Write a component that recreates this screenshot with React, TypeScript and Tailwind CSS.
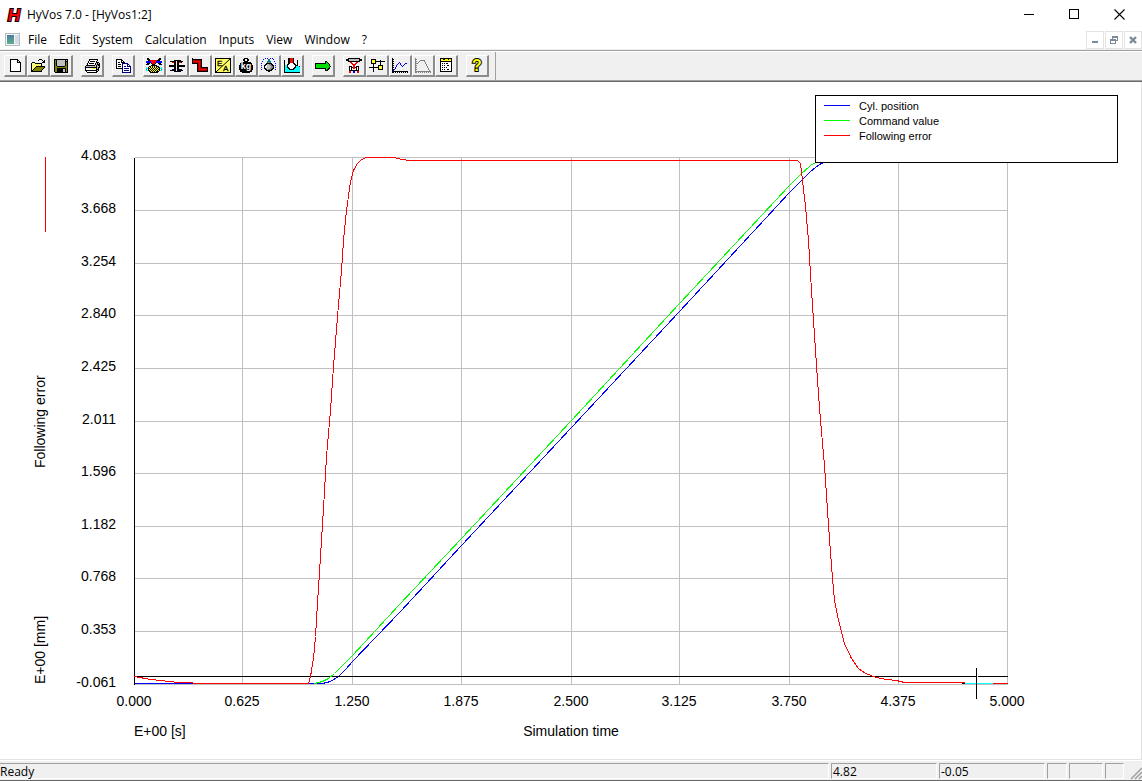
import React from "react";

const COLORS: Record<string, string> = {
  k: "#000000",
  w: "#ffffff",
  y: "#ffff00",
  p: "#ffffa0",
  o: "#808000",
  g: "#c0c0c0",
  d: "#808080",
  n: "#000080",
  b: "#0000ff",
  r: "#ff0000",
  m: "#a00000",
  c: "#00ffff",
  t: "#008080",
  l: "#00e000",
};

// 16x15 bitmaps, one character per pixel
const BITMAPS: Record<string, string[]> = {
  new: [
    "",
    "...kkkkkkkk",
    "...kwwwwwwkk",
    "...kwwwwwwkwk",
    "...kwwwwwwkkkk",
    "...kwwwwwwwwwk",
    "...kwwwwwwwwwk",
    "...kwwwwwwwwwk",
    "...kwwwwwwwwwk",
    "...kwwwwwwwwwk",
    "...kwwwwwwwwwk",
    "...kwwwwwwwwwk",
    "...kwwwwwwwwwk",
    "...kkkkkkkkkkk",
  ],
  open: [
    "",
    ".........kkk",
    "........k...k.k",
    ".............kk",
    "..kkk.......kkk",
    ".kywykkkkkkk",
    ".kwywywywywk",
    ".kywywywywyk",
    ".kwywykkkkkkkkk",
    ".kywykooooooook",
    ".kwykooooooook",
    ".kykooooooook",
    ".kkooooooook",
    ".kkkkkkkkkkk",
  ],
  save: [
    "",
    ".kkkkkkkkkkkkkk",
    ".kokggggggggkgk",
    ".kokggggggggkkk",
    ".kokggggggggkok",
    ".kokggggggggkok",
    ".kokggggggggkok",
    ".kokggggggggkok",
    ".kookkkkkkkkook",
    ".kooooooooooook",
    ".kookkkkkkkkkok",
    ".kookkkkkkggkok",
    ".kookkkkkkggkok",
    ".kookkkkkkggkok",
    "..kkkkkkkkkkkkk",
  ],
  print: [
    "",
    ".....kkkkkkkkk",
    ".....kwwwwwwwk",
    "....kwkkkkkwk",
    "....kwwwwwwwkkk",
    "...kwkkkkkwkgkgk",
    "...kwwwwwwwkgkkk",
    "..kkkkkkkkkgkgkk",
    ".kggggggggggkggk",
    ".kkkkkkkkkkkkgkk",
    ".kwwwwwwyyywkgk",
    ".kwwwwwwwwwwkkk",
    ".kkkkkkkkkkkkgk",
    "..kwwwwwwwwwkk",
    "...kkkkkkkkkk",
  ],
  copy: [
    "",
    ".kkkkkk",
    ".kwwwwkk",
    ".kwwwwkwk",
    ".kwkkwkkkk",
    ".kwwwwwnnnnnn",
    ".kwkkkwnwwwwnn",
    ".kwwwwwnwwwwnwn",
    ".kwkkkwnwnnwnnnn",
    ".kwwwwwnwwwwwwwn",
    ".kkkkkknwnnnnnwn",
    ".......nwwwwwwwn",
    ".......nwnnnnnwn",
    ".......nwwwwwwwn",
    ".......nnnnnnnnn",
  ],
  valve: [
    ".kk..........kk",
    ".kkk........kkk",
    "..kkrrrrrrrkkk",
    "bbbbbrrrrrbbbbbb",
    "bbbbbrrrrrbbbbbb",
    ".kkk.krrrk..kkk",
    "kkk...kkk....kkk",
    ".....kkkkkk",
    "...kkykykykkk",
    "c.kykykykykykk.c",
    "cckkykykykykykcc",
    "t.kykykykykykk.t",
    "cckkykykykykykcc",
    "...kkykykykkk",
    "....kkkkkkkk",
  ],
  cylinder: [
    "",
    "",
    ".....kkkkkkk",
    ".kkkkkk.kkkkkk",
    "...rrkk.kkrrk",
    ".....kk.kk",
    ".....kk.kk",
    "kkkkkkk.kkkkkkkk",
    "kkkkkkk.kkkkkkkk",
    ".....kk.kk",
    ".....kk.kk",
    "...nnkk.kknnk",
    ".kkkkkk.kkkkkk",
    ".....kkkkkkk",
  ],
  pipe: [
    "k",
    "kkkkkkkkkk",
    "kmmmmmmmmk",
    "krrrrrrrmk",
    "kmmmmmmrmk",
    "kkkkkkmrmk",
    ".....kmrmk",
    ".....kmrmk",
    ".....kmrmk",
    ".....kmrmkkkkkkk",
    ".....kmrmmmmmmmk",
    ".....kmrrrrrrrrk",
    ".....kmmmmmmmmmk",
    ".....kkkkkkkkkkk",
  ],
  damper: [
    "....b.b..b.b",
    "..b....tt...b",
    ".......tt",
    ".b....tttt...b",
    "......tddt",
    "b....kkkkkk...b",
    "....kkggddkk",
    "b..kkwgggddkk.b",
    "...kwwggggddk",
    "b..kwgggggddk.b",
    "...kkggggddkk",
    "b...kkgdddkk..b",
    ".....kkkkkk",
    ".......kk",
  ],
  tank: [
    "....kkrrrk",
    "....kkrrrk",
    "k...kkrrrk...k",
    "k...kkrrrk...k",
    "k...kkrrrk...k",
    "k...kkwwwkk..k",
    "k..kkwwwwwkk.k",
    "kcckwwwwwwwkkk",
    "kcckwwwwwwwkccck",
    "kcckkwwwwwkkcccc",
    "kccckkwwwkkccccc",
    "kcccckkkkkcccccc",
    "kccccccccccccccc",
    "kccccccccccccccc",
    "kkkkkkkkkkkkkkkk",
  ],
  run: [
    "",
    "",
    "",
    "..........kk",
    "..........klk",
    "kkkkkkkkkkkllk",
    "klllllllllllllk",
    "klllllllllllllk",
    "kllllllllllllllk",
    "klllllllllllllk",
    "kkkkkkkkkkkllkk",
    "..........klkk",
    "..........kkk",
  ],
  pump: [
    "..kkkkkkkkkkkk",
    "kkkggggggggggkkk",
    "kkkggggggggggkkk",
    "..kkkkkkkkkkkk",
    "....rrwwwwrr",
    "....wrrwwrrw",
    "....wwrrrrww",
    "....wwwrrwww",
    "...kkkwrrwkkk",
    "...kwkkrrkkwk",
    "...kwkwrrwkwk",
    "...kwkwwwwkwk",
    "...kkkkkkkkkk",
    "...rr..bb..rr",
    "...rr..bb..rr",
  ],
  circuit: [
    "",
    "..kkkkk",
    "..kyyyk....k",
    "..kypykkkkkkkkkk",
    "..kyyyk....k",
    "..kkkkk....k",
    "....k......k",
    "....k....kkkkk",
    "....k....kyyyk",
    "kkkkkkkkkkypyk",
    "....k....kyyyk",
    "....k....kkkkk",
    "....k......",
    "....k",
  ],
  chart: [
    "k",
    "kk",
    "k",
    "kk",
    "k......b",
    "kk....b.b....bb",
    "k....b..b...b",
    "kk..b....b.b",
    "k...b.....b",
    "kk.b",
    "k..b",
    "kkb",
    "kb",
    "kkkkkkkkkkkkkkkk",
    "kk.k.k.k.k.k.k.k",
  ],
  response: [
    "d",
    "dd",
    "d....ddddd",
    "dd..d....d",
    "d..d......d",
    "ddd.......d",
    "d..........d",
    "dd.........d",
    "d...........d",
    "dd..........d",
    "d............d",
    "dd...........d",
    "d.............d",
    "dddddddddddddddd",
    "dd.d.d.d.d.d.d.d",
  ],
  table: [
    "..kkkkkkkkkkkk",
    "..kyykkyyykyyk",
    "..kyyyyyyyyyyk",
    "..kkkkkkkkkkkk",
    "..kwwwwwwwwwwk",
    "..kwkwkwkkwwwk",
    "..kwwwwwwwwwwk",
    "..kwkwkwwkkwwk",
    "..kwwwwwwwwwwk",
    "..kwkwkwkwwwwk",
    "..kwwwwwwwwwwk",
    "..kwkwkwwkkwwk",
    "..kwwwwwwwwwwk",
    "..kkkkkkkkkkkk",
  ],
};

const Bitmap = ({ name }: { name: string }) => (
  <svg width="16" height="15" viewBox="0 0 16 15" shapeRendering="crispEdges" aria-hidden="true">
    {BITMAPS[name].map((row, y) =>
      row
        .split("")
        .map((c, x) =>
          COLORS[c] ? <rect key={`${x}-${y}`} x={x} y={y} width="1" height="1" fill={COLORS[c]} /> : null
        )
    )}
  </svg>
);

const InputsIcon = () => (
  <svg width="16" height="15" viewBox="0 0 16 15" aria-hidden="true">
    <rect x="0.5" y="0.5" width="15" height="14" fill="#ffff60" stroke="#000" />
    <path d="M1 14L15 1" stroke="#000" />
    <text x="2" y="8" fontSize="8" stroke="#000" strokeWidth="0.3" fontFamily="Liberation Sans, sans-serif">E</text>
    <text x="8" y="13" fontSize="8" stroke="#000" strokeWidth="0.3" fontFamily="Liberation Sans, sans-serif">A</text>
  </svg>
);

const MassIcon = () => (
  <svg width="16" height="15" viewBox="0 0 16 15" aria-hidden="true">
    <path d="M6 0h4v1h1v2h-1v1h3v1h1v2h1v5h-1v2h-2v1H4v-1H2v-2H1V7h1V5h1V4h3V3H5V1h1z" fill="#000" />
    <rect x="7" y="1" width="2" height="2" fill="#f0f0f0" />
    <text x="8" y="11" fontSize="9" fontWeight="bold" textAnchor="middle" fill="#fff" fontFamily="Liberation Sans, sans-serif">
      kg
    </text>
  </svg>
);

const HelpIcon = () => (
  <svg width="16" height="15" viewBox="0 0 16 15" className="overflow-visible" aria-hidden="true">
    <text
      x="8"
      y="13"
      fontSize="16"
      fontWeight="bold"
      textAnchor="middle"
      fill="#ffff00"
      stroke="#000"
      strokeWidth="2"
      paintOrder="stroke"
      fontFamily="Liberation Sans, sans-serif"
    >
      ?
    </text>
  </svg>
);

const toolGroups = [
  [
    { label: "New", icon: <Bitmap name="new" /> },
    { label: "Open", icon: <Bitmap name="open" /> },
    { label: "Save", icon: <Bitmap name="save" /> },
  ],
  [{ label: "Print", icon: <Bitmap name="print" /> }],
  [{ label: "Copy", icon: <Bitmap name="copy" /> }],
  [
    { label: "Valve", icon: <Bitmap name="valve" /> },
    { label: "Cylinder", icon: <Bitmap name="cylinder" /> },
    { label: "Pipes", icon: <Bitmap name="pipe" /> },
    { label: "Input signals", icon: <InputsIcon /> },
    { label: "Mass", icon: <MassIcon /> },
    { label: "Damping", icon: <Bitmap name="damper" /> },
    { label: "Supply", icon: <Bitmap name="tank" /> },
  ],
  [{ label: "Run", icon: <Bitmap name="run" /> }],
  [
    { label: "Drive", icon: <Bitmap name="pump" /> },
    { label: "Controller", icon: <Bitmap name="circuit" /> },
    { label: "Time response", icon: <Bitmap name="chart" /> },
    { label: "Frequency response", icon: <Bitmap name="response" /> },
    { label: "Results", icon: <Bitmap name="table" /> },
  ],
  [{ label: "Help", icon: <HelpIcon /> }],
];

const menus = ["File", "Edit", "System", "Calculation", "Inputs", "View", "Window", "?"];

const TitleBar = () => (
  <header className="flex h-[29px] shrink-0 items-center pl-[6px]">
    <svg width="16" height="16" viewBox="0 0 16 16" className="overflow-visible" aria-hidden="true">
      <text
        x="8"
        y="14"
        fontSize="17"
        fontWeight="bold"
        fontStyle="italic"
        textAnchor="middle"
        fill="#ff0000"
        stroke="#000"
        strokeWidth="2"
        paintOrder="stroke"
        fontFamily="Liberation Sans, sans-serif"
      >
        H
      </text>
    </svg>
    <h1 className="ml-[5px] flex-1">HyVos 7.0 - [HyVos1:2]</h1>
    <button aria-label="Minimize" className="flex h-full w-[45px] items-center justify-center">
      <svg width="11" height="11" shapeRendering="crispEdges">
        <path d="M0 5.5H10" stroke="#000" />
      </svg>
    </button>
    <button aria-label="Maximize" className="flex h-full w-[45px] items-center justify-center">
      <svg width="11" height="11" shapeRendering="crispEdges">
        <rect x="0.5" y="0.5" width="9" height="9" fill="none" stroke="#000" />
      </svg>
    </button>
    <button aria-label="Close" className="flex h-full w-[45px] items-center justify-center">
      <svg width="11" height="11">
        <path d="M0.5 0.5L10.5 10.5M10.5 0.5L0.5 10.5" stroke="#000" strokeWidth="1.1" />
      </svg>
    </button>
  </header>
);

const childButton = "flex h-[18px] w-[18px] items-center justify-center border border-[#e3e3e3] bg-white";

const MenuBar = () => (
  <nav className="flex h-[21px] shrink-0 items-end border-b border-[#eeeeee] pl-[5px]">
    <svg width="17" height="16" viewBox="0 0 17 16" aria-hidden="true">
      <defs>
        <linearGradient id="doc" x1="0" y1="0" x2="0" y2="1">
          <stop offset="0" stopColor="#4a7fa0" />
          <stop offset="1" stopColor="#5fae8a" />
        </linearGradient>
      </defs>
      <rect x="0.5" y="0.5" width="14" height="12" fill="#f4f6f8" stroke="#b4bcc4" />
      <rect x="2" y="2" width="7" height="9" fill="url(#doc)" />
      <rect x="10" y="2" width="4" height="9" fill="#d5dbe0" />
    </svg>
    <ul className="flex flex-1">
      {menus.map((item) => (
        <li key={item}>
          <button className="px-[6px]">{item}</button>
        </li>
      ))}
    </ul>
    <div className="flex gap-px">
      <button aria-label="Minimize document" className={childButton}>
        <svg width="10" height="10" shapeRendering="crispEdges">
          <rect x="2" y="6" width="6" height="2" fill="#7a8a99" />
        </svg>
      </button>
      <button aria-label="Restore document" className={childButton}>
        <svg width="10" height="10" shapeRendering="crispEdges" fill="#7a8a99">
          <path d="M3 1h6v5H7V5h1V3H4v1H3zM1 4h6v5H1zM2 6v2h4V6z" fillRule="evenodd" />
        </svg>
      </button>
      <button aria-label="Close document" className={childButton}>
        <svg width="10" height="10">
          <path d="M2 2L8 8M8 2L2 8" stroke="#7a8a99" strokeWidth="2.4" />
        </svg>
      </button>
    </div>
  </nav>
);

const Toolbar = () => (
  <div className="shrink-0 border-t border-b border-t-[#a0a0a0] border-b-[#696969]">
    <div className="flex gap-2 border-t border-b border-t-white border-b-[#a0a0a0] bg-[#f0f0f0] pl-1">
      {toolGroups.map((group, i) => (
        <div key={i} className="flex py-[3px]">
          {group.map((tool) => (
            <button
              key={tool.label}
              aria-label={tool.label}
              className="flex h-[22px] w-[23px] items-start border-t border-l border-r-2 border-b-2 border-t-white border-l-white border-r-[#8c8c8c] border-b-[#8c8c8c] pt-[2px] pl-[2px]"
            >
              {tool.icon}
            </button>
          ))}
        </div>
      ))}
      <div className="-ml-[2px] w-px bg-[#a0a0a0]" />
    </div>
  </div>
);

const gridX = [134, 242, 352, 461, 571, 679, 789, 898, 1007];
const gridY = [157, 210, 263, 315, 368, 421, 473, 526, 578, 631, 684];
const xLabels = ["0.000", "0.625", "1.250", "1.875", "2.500", "3.125", "3.750", "4.375", "5.000"];
const yLabels = ["4.083", "3.668", "3.254", "2.840", "2.425", "2.011", "1.596", "1.182", "0.768", "0.353", "-0.061"];

const series = [
  {
    name: "Cyl. position",
    color: "#0000ff",
    points:
      "134,683 322,683 330,681 338,676 345,669 352,661 400,611 461,545 571,427 679,311 789,192 801,180 810,171 819,164 823,162",
  },
  {
    name: "Command value",
    color: "#00ff00",
    points: "314,683 322,681 328,678 334,673 352,655 399,604 461,538 571,420 679,303 789,185 800,174 810,165 815,162",
  },
  {
    name: "Following error",
    color: "#ff0000",
    points:
      "134,676 150,679 160,680 178,682 206,683 308,683 310,676 313,658 315,636 317,603 320,556 323,508 326,456 330,410 333,366 337,316 341,270 343,240 346,210 350,181 353,170 357,163 361,159 366,157 393,157 402,159 409,160 797,160 800,163 802,180 805,206 808,240 811,290 814,335 817,380 820,420 824,465 828,525 832,578 834,600 837,615 840,628 844,643 851,658 858,668 865,673 876,677 886,679 896,680 904,682 963,682 965,683 1007,683",
  },
];

const Plot = () => (
  <svg
    className="h-full w-full"
    viewBox="0 82 1141 677"
    preserveAspectRatio="xMinYMin meet"
    fontFamily="Liberation Sans, Arial, sans-serif"
    fontSize="14"
    role="img"
    aria-label="Simulation result"
  >
    <g transform="translate(0.5 0.5)" shapeRendering="crispEdges" fill="none">
      {gridX.map((x) => (
        <path key={x} d={`M${x} 157V684`} stroke="#c0c0c0" />
      ))}
      {gridY.map((y) => (
        <path key={y} d={`M134 ${y}H1007`} stroke="#c0c0c0" />
      ))}
      <path d="M134 157V684M134 676H1007" stroke="#000" />
      {series.map((s) => (
        <polyline key={s.name} points={s.points} stroke={s.color} />
      ))}
      <path d="M45 156V231" stroke="#ff0000" />
      {/* cursor */}
      <path d="M964 683H992" stroke="#00ffff" />
      <path d="M961 683H964M976 667V675M976 676V698" stroke="#000" />
      <path d="M976 676H977" stroke="#fff" />
      <rect x="815" y="95" width="302" height="67" fill="#fff" stroke="#000" />
      {series.map((s, i) => (
        <path key={s.name} d={`M823 ${105 + i * 15}H849`} stroke={s.color} />
      ))}
    </g>
    {series.map((s, i) => (
      <text key={s.name} x="859" y={110 + i * 15} fontSize="11">
        {s.name}
      </text>
    ))}
    {yLabels.map((label, i) => (
      <text key={label} x="116" y={gridY[i] + 3} textAnchor="end">
        {label}
      </text>
    ))}
    {xLabels.map((label, i) => (
      <text key={label} x={gridX[i]} y="706" textAnchor="middle">
        {label}
      </text>
    ))}
    <text x="134" y="736">E+00 [s]</text>
    <text x="571" y="736" textAnchor="middle">Simulation time</text>
    <text transform="translate(45 468) rotate(-90)">Following error</text>
    <text transform="translate(45 684) rotate(-90)">E+00 [mm]</text>
  </svg>
);

const pane = "h-4 border-t border-l border-[#a0a0a0] border-r border-b border-r-white border-b-white leading-4";

const StatusBar = () => (
  <footer className="flex h-[21px] shrink-0 items-start gap-[2px] border-t border-b border-t-white border-b-[#696969] bg-[#f0f0f0] pt-[2px]">
    <div className={`${pane} flex-1 border-l-0`}>Ready</div>
    <div className={`${pane} w-[106px] pl-px`}>4.82</div>
    <div className={`${pane} w-[106px] pl-px`}>-0.05</div>
    <div className={`${pane} w-5`} />
    <div className={`${pane} w-[34px]`} />
    <div className={`${pane} w-[19px]`} />
    <svg width="16" height="17" viewBox="0 0 16 17" className="shrink-0" aria-hidden="true">
      <path d="M5 16L16 5M9 16L16 9M13 16L16 13" stroke="#a0a0a0" strokeWidth="1.5" />
    </svg>
  </footer>
);

const App = () => {
  return (
    <div className="flex h-screen flex-col overflow-hidden bg-white font-['Open_Sans',sans-serif] text-[12px] text-black">
      <TitleBar />
      <MenuBar />
      <Toolbar />
      <main className="min-h-0 flex-1 border-r border-b border-[#e3e3e3]">
        <Plot />
      </main>
      <StatusBar />
    </div>
  );
};

export default App;
